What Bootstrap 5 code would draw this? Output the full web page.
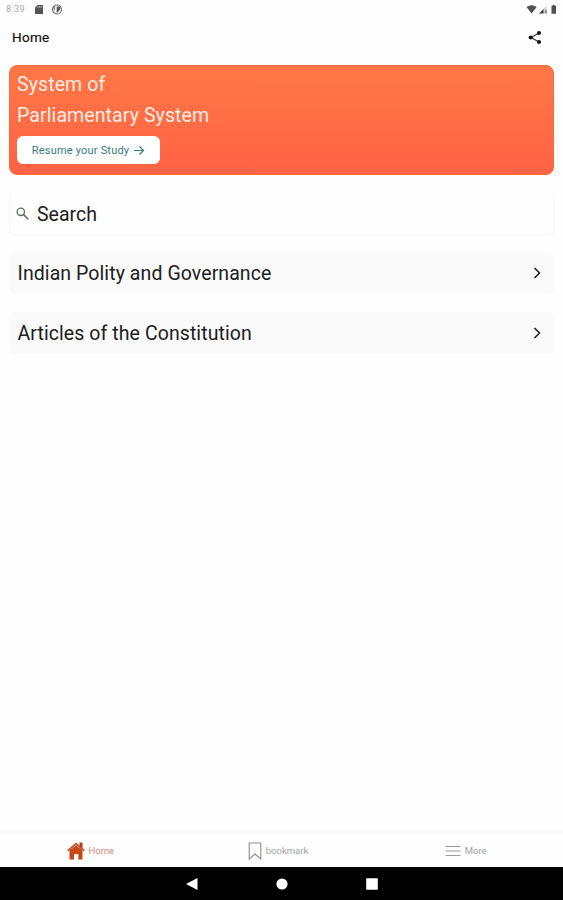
<!DOCTYPE html>
<html lang="en">
<head>
<meta charset="utf-8">
<meta name="viewport" content="width=device-width, initial-scale=1">
<title>Home</title>
<link href="https://cdn.jsdelivr.net/npm/bootstrap@5.3.0/dist/css/bootstrap.min.css" rel="stylesheet">
<style>
body{font-family:Roboto,sans-serif;color:#202020;background:#fefefe;line-height:1.2}
svg{display:block;flex:none}
.status{height:18px;padding:0 4px 0 6px;font-size:9px;color:#a8a8a8}
.clock{width:20px;letter-spacing:.4px}
.topbar{height:39px;padding:0 21px 0 12px;font-size:13.5px;font-weight:400;letter-spacing:.3px;color:#101010;-webkit-text-stroke:.2px #101010}
.content{padding:8px 8px 0 9px}
.hero{height:110px;margin-right:1px;padding:3px 7px 0;border:1px solid #fa6a35;border-radius:8px;background:linear-gradient(#ff7846,#ff6245);color:#ffeee5}
.hero h1{font-size:19.5px;font-weight:400;line-height:31px;letter-spacing:.1px}
.resume{width:143px;height:28px;margin-top:5px;border-radius:6px;background:#fff;color:#377c78;font-size:11px;line-height:1;letter-spacing:.2px}
.resume:hover{background:#f7f7f7}
.find{height:43px;margin-top:18px;padding:0 6px 2px;border:1px solid #f8f8f8;border-top-color:transparent;border-radius:7px;font-size:19.5px}
.find span{padding-top:2px}
.topic{height:42px;padding:0 12px 0 8.5px;border-radius:7px;background:#fafafa;font-size:19.5px;letter-spacing:.08px;color:#202020}
.topic span{padding-top:2px}
.topic+.topic{margin-top:18px}
.tabs{height:37px;border-top:4px solid #f8f8f8;font-size:9.5px;color:#a3a3a3}
.tabs a{color:inherit;padding-right:7px}
.tabs .current{color:#d58a77}
.sysnav{height:33px;background:#000;gap:78px}
</style>
</head>
<body>
<div class="d-flex flex-column vh-100 overflow-hidden">
<header>
<div class="status d-flex align-items-center">
<span class="clock">8:39</span>
<svg class="ms-2" width="10" height="11" viewBox="0 0 10 11"><path d="M3.500 1H9v9H1V3.500z" fill="#555"/><path d="M4 2v2M5.700 2v2M7.400 2v2" stroke="#ccc" stroke-width=".7"/></svg>
<svg class="ms-2" width="11" height="11" viewBox="0 0 11 11"><circle cx="5" cy="5.500" r="4.500" fill="#fff" stroke="#666" stroke-width="1.100"/><path d="M4.700 5V2.500h3.600V5L5.800 8.500H4.500z" fill="#555"/><path d="M.7 3.500 3.200 1v6.500z" fill="#888"/></svg>
<svg class="ms-auto" width="33" height="11" viewBox="0 0 33 11"><path d="M.5 3Q5.500-.7 10.700 3L5.600 9.500z" fill="#505050"/><path d="M13 9.500 20.500 2v7.500z" fill="#ccc"/><path d="M13 9.500 17.500 5v4.500zM19.500 6h1v3.500h-1z" fill="#444"/><path d="M25.500 1.800h1.300V1h2v.8H30v8h-4.500z" fill="#505050"/></svg>
</div>
<div class="topbar d-flex align-items-center justify-content-between">
<span>Home</span>
<svg width="14" height="14" viewBox="0 0 14 14"><path d="M11 2 3 6.500l8 4.500" fill="none" stroke="#333" stroke-width="1.200"/><g fill="#111"><circle cx="2.700" cy="6.500" r="2.100"/><circle cx="11" cy="2.100" r="2"/><circle cx="11" cy="11" r="2"/></g></svg>
</div>
</header>
<main class="content flex-grow-1">
<section class="hero">
<h1 class="m-0">System of<br>Parliamentary System</h1>
<button class="resume btn p-0 border-0 d-flex align-items-center justify-content-center gap-1">Resume your Study
<svg width="12" height="11" viewBox="0 0 12 11"><path d="M1 5.500h9.500M6.500 1.500l4 4-4 4" fill="none" stroke="#377c78" stroke-width="1.200"/></svg></button>
</section>
<div class="find d-flex align-items-center">
<svg width="13" height="13" viewBox="0 0 13 13"><circle cx="4.800" cy="4.800" r="3.700" fill="none" stroke="#587058" stroke-width="1.300"/><path d="m7.600 7.600 4.600 4.600" stroke="#587058" stroke-width="1.500"/></svg>
<span class="ms-2">Search</span>
</div>
<a href="#" class="topic d-flex align-items-center justify-content-between text-decoration-none mt-3"><span>Indian Polity and Governance</span>
<svg width="10" height="12" viewBox="0 0 10 12"><path d="m1.500 1 5 5-5 5" fill="none" stroke="#222" stroke-width="1.600"/></svg></a>
<a href="#" class="topic d-flex align-items-center justify-content-between text-decoration-none"><span>Articles of the Constitution</span>
<svg width="10" height="12" viewBox="0 0 10 12"><path d="m1.500 1 5 5-5 5" fill="none" stroke="#222" stroke-width="1.600"/></svg></a>
</main>
<nav class="tabs d-flex">
<a href="#" class="current col-4 d-flex align-items-center justify-content-center gap-1 text-decoration-none">
<svg width="18" height="18" viewBox="0 0 18 18"><path d="M2.500 8.500 9 3.500l6.500 5V17.500h-4.200v-5.500H7v5.500H2.500z" fill="#c94715"/><path d="M.8 8.800 9 1.800l8.200 7" fill="none" stroke="#b95634" stroke-width="1.800"/><path d="M12.500.5h3v6l-3-2.500z" fill="#b63c12"/></svg><span>Home</span></a>
<a href="#" class="col-4 d-flex align-items-center justify-content-center text-decoration-none">
<svg width="14" height="18" viewBox="0 0 14 18"><path d="M1.200 1h11.600v16L7 12l-5.800 5z" fill="none" stroke="#8c8c8c" stroke-width="1.100"/></svg><span class="ms-1">bookmark</span></a>
<a href="#" class="col-4 d-flex align-items-center justify-content-center gap-1 text-decoration-none">
<svg width="16" height="12" viewBox="0 0 16 12"><path d="M.5 1.500h15M.5 6h15M.5 10.500h15" stroke="#9a9a9a" stroke-width="1.100"/></svg><span>More</span></a>
</nav>
<div class="sysnav d-flex align-items-center justify-content-center">
<svg width="12" height="12" viewBox="0 0 12 12"><path d="M0 6 11.500 0v12z" fill="#fff"/></svg>
<svg width="12" height="12" viewBox="0 0 12 12"><circle cx="6" cy="6" r="5.600" fill="#fff"/></svg>
<svg width="12" height="12" viewBox="0 0 12 12"><rect x=".2" y=".2" width="11.600" height="11.600" rx=".8" fill="#fff"/></svg>
</div>
</div>
<script src="https://cdn.jsdelivr.net/npm/bootstrap@5.3.0/dist/js/bootstrap.bundle.min.js"></script>
</body>
</html>
